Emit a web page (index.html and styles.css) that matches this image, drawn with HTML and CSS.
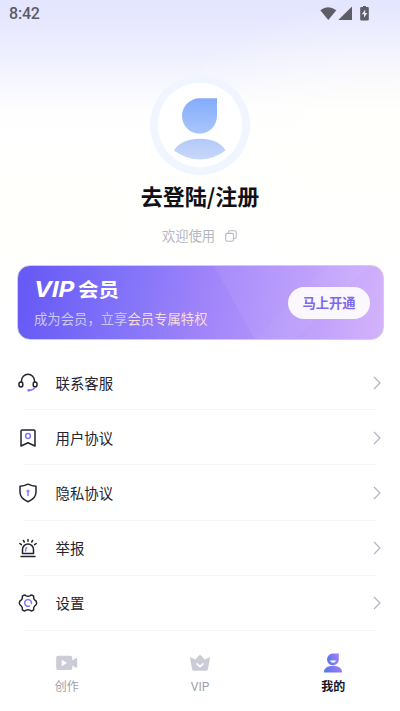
FILE: index.html
```html
<!DOCTYPE html>
<html lang="zh-CN">
<head>
<meta charset="utf-8">
<title>我的</title>
<link rel="stylesheet" href="styles.css">
</head>
<body>
<div class="screen">
  <header class="status">
    <span class="time">8:42</span>
    <svg class="signals" width="50" height="16" viewBox="0 0 50 16" fill="#5d5d65">
      <path d="M0.3 4.3Q8 -2 16.3 4.3L8.3 14Z"/>
      <path d="M32 0.5V14H18.3Z"/>
      <path d="M41.5 1H43V0h3v1h1.8q1 0 1 1v11.4q0 1-1 1h-6.600q-1 0-1-1V2q0-1 1-1Z"/>
      <path fill="#e8e8fb" d="M45.2 3.4L41.8 8.2H44V11.8L47.3 7H45.2Z"/>
    </svg>
  </header>

  <section class="profile">
    <div class="avatar">
      <svg width="100" height="100" viewBox="0 0 100 100">
        <defs>
          <linearGradient id="head" x1="0" y1="0" x2="0" y2="1"><stop stop-color="#83acfc"/><stop offset="1" stop-color="#aac5fb"/></linearGradient>
          <linearGradient id="body" x1="0" y1="0" x2="0" y2="1"><stop stop-color="#b2c9f8"/><stop offset="1" stop-color="#c9d8fb"/></linearGradient>
        </defs>
        <circle cx="50" cy="50" r="50" fill="#f0f5ff"/>
        <circle cx="50" cy="50" r="42.3" fill="#fff"/>
        <path fill="url(#head)" d="M49.5 23.3H67V41A17.5 17.7 0 1 1 49.5 23.3Z"/>
        <path fill="url(#body)" d="M24 75.5C28 68 38 63.8 50 63.8S71.500 68 75.500 75.500Q64 84.500 50 84.500T24 75.500Z"/>
      </svg>
    </div>
    <h1 class="login">去登陆/注册</h1>
    <div class="welcome">
      <span>欢迎使用</span>
      <svg width="12" height="12" viewBox="0 0 12 12" fill="none" stroke="#b5b6c5" stroke-width="1.1"><rect x=".7" y="3.400" width="7.800" height="7.800" rx="1.500"/><path d="M3.300 3.200V2.200Q3.300 .7 4.800 .7H9.300Q11.200 .7 11.200 2.600V7Q11.200 8.500 9.700 8.500H8.700"/></svg>
    </div>
  </section>

  <section class="card">
    <svg class="shine" width="366" height="74" viewBox="0 0 366 74" preserveAspectRatio="none">
      <path fill="#fff" fill-opacity=".06" d="M196 0H309L236 74H237L215 34Z"/>
      <path fill="#fff" fill-opacity=".08" d="M309 0H351L277 74H236Z"/>
      <path fill="#fff" fill-opacity=".03" d="M351 0H366V74H277Z"/>
    </svg>
    <div class="pitch">
      <div class="brand"><span class="vip">VIP</span><span class="member">会员</span></div>
      <p class="desc">成为会员，立享<span class="perk">会员专属特权</span></p>
    </div>
    <span class="open">马上开通</span>
  </section>

  <main class="menu">
    <div class="row">
      <svg class="icon" viewBox="0 0 20 20"><path d="M3.500 9V7.800A6.500 6.500 0 0 1 16.500 7.800V9"/><rect x="1" y="9" width="3.800" height="5" rx="1.900"/><rect x="15.200" y="9" width="3.800" height="5" rx="1.900"/><path class="accent" d="M16.500 14.800Q15 17.200 11 17.300"/><circle cx="10.800" cy="17.300" r="1.400" fill="#8278f6" stroke="none"/></svg>
      <span class="label">联系客服</span><svg class="arrow" viewBox="0 0 8 14"><path d="M1 1L7 7L1 13"/></svg>
    </div>
    <div class="row">
      <svg class="icon" viewBox="0 0 20 20"><path d="M4.200 2H15.800Q17 2 17 3.200V18L10 14.700L3 18V3.200Q3 2 4.200 2Z"/><circle class="accent" cx="10" cy="8" r="2.400"/></svg>
      <span class="label">用户协议</span><svg class="arrow" viewBox="0 0 8 14"><path d="M1 1L7 7L1 13"/></svg>
    </div>
    <div class="row">
      <svg class="icon" viewBox="0 0 20 20"><path d="M10 1.200Q14 3.200 18 3.300V9Q18 15.500 10 18.700Q2 15.500 2 9V3.300Q6 3.200 10 1.200Z"/><path class="accent" d="M10 8V12.500"/><circle cx="10" cy="8" r="1.600" fill="#9a83f8" stroke="none"/></svg>
      <span class="label">隐私协议</span><svg class="arrow" viewBox="0 0 8 14"><path d="M1 1L7 7L1 13"/></svg>
    </div>
    <div class="row">
      <svg class="icon" viewBox="0 0 20 20"><path d="M3 18.400H17M4.500 15.500H15.500M4.500 15.200V11.500A5.500 5.500 0 0 1 15.500 11.500V15.200M10 1.500V3.200M5.400 2.500L6.300 4M14.600 2.500L13.700 4M1.800 5.500L3.400 6.700M18.200 5.500L16.600 6.700"/><path class="accent" d="M7.700 13V11.300Q7.700 10 8.800 9.700"/></svg>
      <span class="label">举报</span><svg class="arrow" viewBox="0 0 8 14"><path d="M1 1L7 7L1 13"/></svg>
    </div>
    <div class="row">
      <svg class="icon" viewBox="0 0 20 20"><path d="M6 2.200Q7.200 1.800 8 2.900Q10 3.700 12 2.900Q12.800 1.800 14 2.200L15.600 3.200Q15.400 6 16.700 7Q18.500 7.600 18.700 10Q18.500 12.400 16.700 13Q15.400 14 15.600 16.800L14 17.800Q12.800 18.200 12 17.100Q10 16.300 8 17.100Q7.200 18.200 6 17.800L4.400 16.800Q4.600 14 3.300 13Q1.500 12.400 1.300 10Q1.500 7.600 3.300 7Q4.600 6 4.400 3.200Z"/><path class="accent" d="M11.500 13A3.400 3.400 0 1 1 13.400 10.600"/></svg>
      <span class="label">设置</span><svg class="arrow" viewBox="0 0 8 14"><path d="M1 1L7 7L1 13"/></svg>
    </div>
  </main>

  <nav class="tabs">
    <div class="tab">
      <svg width="22" height="20" viewBox="0 0 22 20"><path fill="#cbccd8" d="M2 2.800H14.500Q16.300 2.800 16.300 4.600V7.500L19 5.500Q21.200 4.500 21.200 6V14Q21.200 15.300 19 14.300L16.300 12.500V15.200Q16.300 17 14.500 17H2Q.2 17 .2 15.200V4.600Q.2 2.800 2 2.800Z"/><path fill="#fff" d="M5.700 6.700L11 10L5.700 13.300Z"/></svg>
      <span>创作</span>
    </div>
    <div class="tab">
      <svg width="22" height="20" viewBox="0 0 22 20"><path fill="#cbccd8" d="M1.700 4.500L6.400 6.500L10 2.500Q11 1.500 12 2.500L15.600 6.500L20.300 4.500Q21.200 4.300 21 5.500L18.800 16.500Q18.500 17.700 17.300 17.700H4.700Q3.500 17.700 3.200 16.500L1 5.500Q.8 4.300 1.700 4.500Z"/><path d="M8 10.800L11 13.700L14 10.800" fill="none" stroke="#fff" stroke-width="1.600" stroke-linecap="round" stroke-linejoin="round"/></svg>
      <span class="latin">VIP</span>
    </div>
    <div class="tab active">
      <svg width="22" height="20" viewBox="0 0 22 20">
        <defs><linearGradient id="me" x1="0" y1=".6" x2="1" y2=".3"><stop stop-color="#5579e8"/><stop offset="1" stop-color="#a47df7"/></linearGradient></defs>
        <path fill="url(#me)" d="M10.500 .5H16.800V6.500A5.900 5.900 0 1 1 10.500 .5Z"/>
        <path fill="url(#me)" d="M2 19.500Q2 12.800 11 12.800T20 19.500Z"/>
        <path fill="#fff" d="M8 7.500H14Q13.500 9.800 11 9.800T8 7.500Z"/>
      </svg>
      <span>我的</span>
    </div>
  </nav>
</div>
</body>
</html>
```
FILE: styles.css
```css
* { box-sizing: border-box; }
body {
  margin: 0;
  font-family: "Noto Sans CJK SC", sans-serif;
  background: #fff;
}
svg { display: block; flex: none; }
.screen {
  width: 400px;
  height: 711px;
  overflow: hidden;
  display: flex;
  flex-direction: column;
  background:
    radial-gradient(ellipse 210px 130px at 370px 135px, rgba(255, 255, 250, .8), rgba(255, 255, 250, 0)),
    radial-gradient(ellipse 190px 100px at 50px 215px, rgba(255, 255, 251, .9), rgba(255, 255, 252, 0)),
    linear-gradient(#e4e5fe 0, #e8e9fe 28px, #f1f2fe 65px, #fefeff 110px, #fff 150px);
}
.status {
  height: 28px;
  padding: 0 30px 0 9px;
  display: flex;
  align-items: center;
  justify-content: space-between;
  color: #5b5b63;
}
.time { font: 500 16px/28px Roboto, sans-serif; letter-spacing: -.2px; }
.signals { margin-top: -1px; }
.profile {
  height: 237px;
  padding-top: 46.5px;
  display: flex;
  flex-direction: column;
  align-items: center;
}
.avatar { height: 100px; }
.login {
  margin: 5px 0 0;
  font-size: 22px;
  line-height: 30px;
  font-weight: 700;
  color: #101116;
}
.welcome {
  margin-top: 16px;
  padding-right: 1px;
  display: flex;
  align-items: center;
  gap: 10px;
  font-size: 13.3px;
  line-height: 20px;
  color: #b5b6c2;
}
.card {
  position: relative;
  flex: none;
  height: 75px;
  margin: 0 16px 0 17px;
  padding: 0 13px 0 16px;
  display: flex;
  align-items: center;
  justify-content: space-between;
  overflow: hidden;
  border: 1px solid #d2cee0;
  border-radius: 13px;
  background: linear-gradient(100deg, #6558f5 0, #8072f9 28%, #a386fa 54%, #b899fb 75%, #d3b1fb 100%);
}
.shine { position: absolute; inset: 0; }
.pitch { position: relative; height: 74px; padding-top: 10px; }
.brand { display: flex; height: 27px; line-height: 27px; color: #fff; }
.vip {
  width: 44px;
  font-family: Inter, sans-serif;
  font-size: 22px;
  font-weight: 700;
  transform: skewX(-12deg) scaleX(1.1);
  transform-origin: 0 50%;
}
.member { font-size: 20.500px; font-weight: 700; transform: scaleY(.92); }
.desc {
  margin: 6px 0 0;
  font-size: 13.350px;
  line-height: 20px;
  color: #cbc9f1;
}
.perk { color: #f5dddc; }
.open {
  position: relative;
  width: 82px;
  height: 32px;
  border-radius: 16px;
  background: #faf7ff;
  color: #7d68ee;
  font-size: 13.300px;
  font-weight: 700;
  line-height: 31px;
  text-align: center;
}
.menu { padding: 15px 19px 0 18px; }
.row {
  height: 55.200px;
  display: flex;
  align-items: center;
  background: linear-gradient(#f6f6f8, #f6f6f8) 5px 100% / 354px 1px no-repeat;
}
.icon {
  width: 20px;
  height: 20px;
  fill: none;
  stroke: #232330;
  stroke-width: 1.500;
  stroke-linecap: round;
  stroke-linejoin: round;
}
.icon .accent { stroke: #8278f6; }
.label { margin-left: 17.500px; flex: 1; font-size: 14.400px; line-height: 22px; color: #24242c; }
.arrow { width: 8px; height: 14px; fill: none; stroke: #b2b3c4; stroke-width: 1.200; }
.tabs {
  flex: 1;
  padding-top: 22px;
  display: grid;
  grid-template-columns: repeat(3, 1fr);
}
.tab {
  display: flex;
  flex-direction: column;
  align-items: center;
  font-size: 12px;
  line-height: 18px;
  color: #a0a1a6;
}
.tab span { margin-top: 4px; }
.tab .latin { margin-top: 5px; font-family: Roboto, sans-serif; }
.tab.active { color: #151525; font-weight: 700; }
```
